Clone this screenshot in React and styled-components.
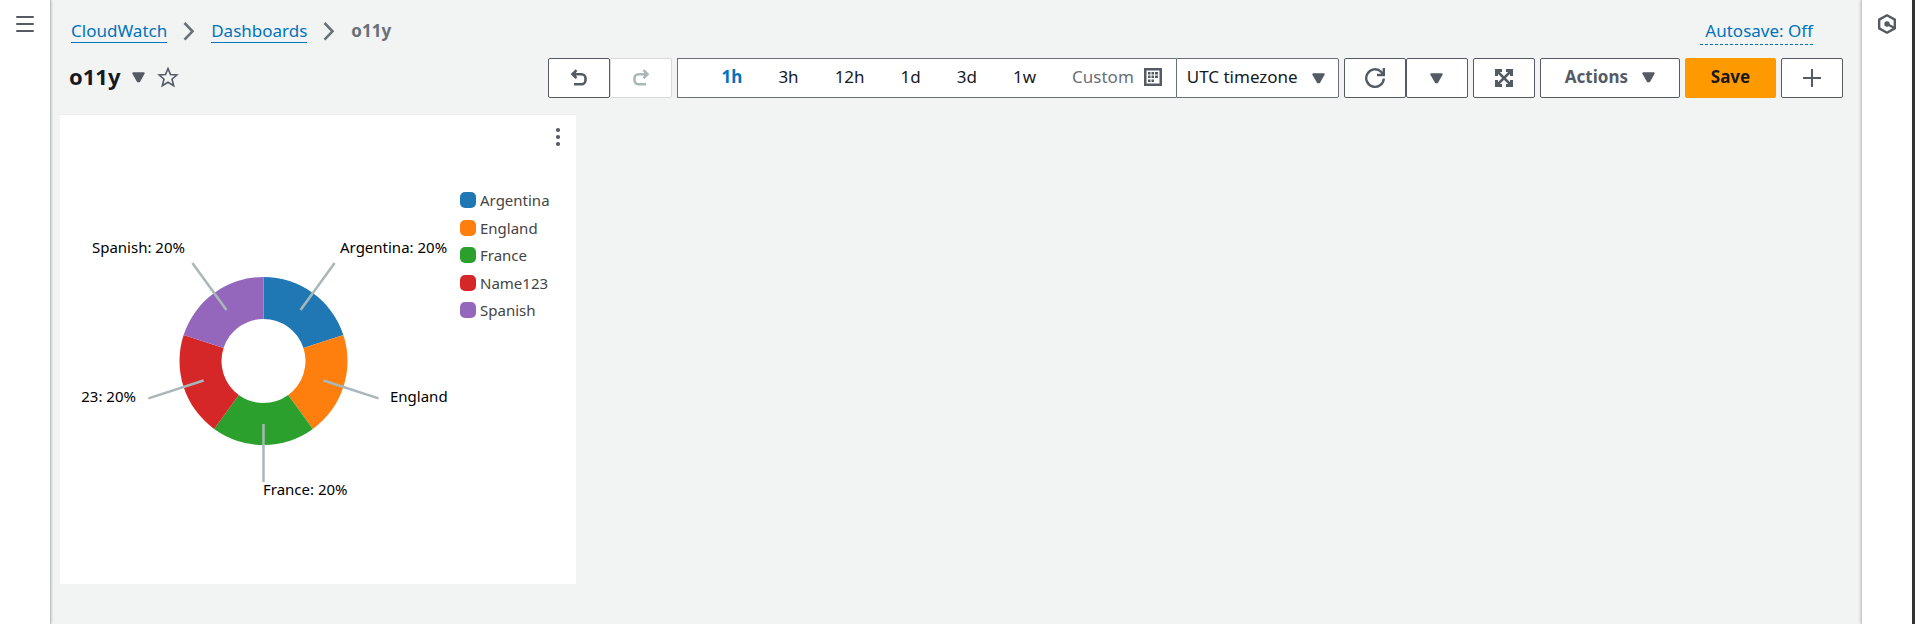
import React from "react";
import styled, { createGlobalStyle, css } from "styled-components";

const ink = "#16191f";
const slate = "#545b64";
const muted = "#687078";
const blue = "#0073bb";

const GlobalStyle = createGlobalStyle`
  *, *::before, *::after { box-sizing: border-box; }
  body {
    margin: 0;
    background: #f2f3f3;
    color: ${ink};
    font: 400 17px/22px "Noto Sans", "Open Sans", sans-serif;
  }
  button, select { font: inherit; color: inherit; margin: 0; }
  svg { display: block; flex: none; }
`;

const Page = styled.div`
  display: flex;
  min-height: 100vh;
`;

const Rail = styled.aside`
  flex: 0 0 auto;
  display: flex;
  flex-direction: column;
  align-items: center;
  background: #fff;
  padding-top: 12px;
`;

const NavRail = styled(Rail)`
  width: 51px;
  border-right: 1px solid #bcc4c5;
  box-shadow: 1px 0 2px rgba(0, 28, 36, 0.15);
`;

const ToolRail = styled(Rail)`
  width: 54px;
  border-left: 1px solid #c4cacb;
  border-right: 3px solid #333;
  box-shadow: -1px 0 2px rgba(0, 28, 36, 0.15);
`;

const IconButton = styled.button`
  display: flex;
  align-items: center;
  justify-content: center;
  min-width: 24px;
  height: 24px;
  padding: 0;
  border: 0;
  background: none;
  color: ${slate};
  cursor: pointer;
`;

const Main = styled.main`
  flex: 1;
  min-width: 0;
  padding: 20px 18px 20px 9px;
`;

const TopRow = styled.div`
  display: flex;
  align-items: flex-start;
  justify-content: space-between;
  min-height: 38px;
  padding: 0 30px 0 11px;
`;

const Crumbs = styled.nav`
  display: flex;
  align-items: flex-start;
  gap: 15px;
  color: ${muted};
`;

const CrumbLink = styled.a`
  color: ${blue};
  text-decoration: none;
  border-bottom: 1px solid ${blue};
`;

const CrumbCurrent = styled.span`
  font-weight: 700;
`;

const AutosaveLink = styled.a`
  padding: 0 0 2px 5px;
  color: ${blue};
  text-decoration: none;
  border-bottom: 1px dashed ${blue};
`;

const HeaderRow = styled.header`
  display: flex;
  align-items: center;
  justify-content: space-between;
  flex-wrap: wrap;
  margin-bottom: 16px;
`;

const TitleGroup = styled.div`
  display: flex;
  align-items: center;
  gap: 6px;
  padding: 0 0 2px 9px;
`;

const Title = styled.h1`
  margin: 0;
  padding-bottom: 2px;
  font-size: 22px;
  line-height: 36px;
  font-weight: 700;
`;

const Toolbar = styled.div`
  display: flex;
  flex-wrap: wrap;
  gap: 5px;
`;

const Joined = styled.div`
  display: flex;
`;

const ToolButton = styled.button`
  display: flex;
  align-items: center;
  justify-content: center;
  gap: 14px;
  min-width: 62px;
  height: 40px;
  padding: ${(p) => (p.$wide ? "0 24px 2px" : "0")};
  border: 1px solid ${slate};
  border-radius: 2px;
  background: #fff;
  color: ${slate};
  font-weight: 700;
  cursor: pointer;
  &:disabled {
    border-color: #d5dbdb;
    color: #aab7b8;
  }
  ${(p) =>
    p.$primary &&
    css`
      min-width: 91px;
      padding-bottom: 2px;
      border-color: #ff9900;
      background: #ff9900;
      color: ${ink};
    `}
`;

const Ranges = styled.div`
  display: flex;
  align-items: center;
  height: 40px;
  padding: 0 14px 2px 26px;
  border: 1px solid ${muted};
  border-right: 0;
  background: #fff;
`;

const RangeButton = styled.button`
  display: flex;
  align-items: center;
  gap: 10px;
  padding: 0 ${(p) => (p.$last ? "0" : "18px")} 0 18px;
  border: 0;
  background: none;
  color: ${(p) => (p.$active ? blue : p.$last ? muted : ink)};
  font-weight: ${(p) => (p.$active ? 700 : 400)};
  cursor: pointer;
`;

const ZoneField = styled.label`
  position: relative;
  display: flex;
  align-items: center;
  width: 163px;
  height: 40px;
`;

const ZoneSelect = styled.select`
  width: 100%;
  height: 100%;
  padding: 0 34px 2px 10px;
  appearance: none;
  border: 1px solid ${muted};
  border-radius: 0 2px 2px 0;
  background: #fff;
`;

const ZoneCaret = styled.span`
  position: absolute;
  right: 14px;
  color: ${slate};
  pointer-events: none;
`;

const Widget = styled.section`
  width: 516px;
  max-width: 100%;
  padding-bottom: 21px;
  border-top: 1px solid #eaeded;
  background: #fff;
`;

const WidgetHeader = styled.div`
  display: flex;
  align-items: center;
  justify-content: flex-end;
  height: 44px;
  padding-right: 6px;
`;

const WidgetBody = styled.div`
  display: flex;
  align-items: flex-start;
  gap: 13px;
  padding-left: 20px;
`;

const ChartText = styled.text`
  font-size: 15px;
  fill: #000;
`;

const Legend = styled.ul`
  display: flex;
  flex-direction: column;
  justify-content: space-between;
  height: 130px;
  margin: 31px 0 0;
  padding: 0;
  list-style: none;
  color: #444;
  font-size: 15px;
  line-height: 20px;
`;

const LegendItem = styled.li`
  display: flex;
  align-items: center;
  gap: 4px;
`;

const Swatch = styled.span`
  width: 16px;
  height: 16px;
  border-radius: 5px;
  background: ${(p) => p.$color};
`;

const Caret = () => (
  <svg width="13" height="11" viewBox="0 0 13 11" aria-hidden="true">
    <path d="M1.300 1.300h10.400L7.200 9.300h-1.400z" fill="currentColor" stroke="currentColor" strokeWidth="2" strokeLinejoin="round" />
  </svg>
);

const Chevron = () => (
  <svg width="14" height="22" viewBox="0 0 14 22" fill="none" stroke="currentColor" strokeWidth="2.600" aria-hidden="true">
    <path d="M2.500 3l8 8.300-8 8.300" />
  </svg>
);

const MenuIcon = () => (
  <svg width="18" height="18" viewBox="0 0 18 18" stroke="currentColor" strokeWidth="2" strokeLinecap="round" aria-hidden="true">
    <path d="M1 2h16M1 9h16M1 16h16" />
  </svg>
);

const HexIcon = () => (
  <svg width="20" height="22" viewBox="0 0 20 22" fill="none" stroke="currentColor" strokeWidth="2.400" aria-hidden="true">
    <path d="M10 2.200l7.800 4.400v8.800L10 19.800l-7.800-4.400V6.600z" strokeLinejoin="round" />
    <circle cx="10" cy="11" r="2.700" fill="currentColor" stroke="none" />
    <path d="M10 11l7.500 4" />
  </svg>
);

const StarIcon = () => (
  <svg width="22" height="22" viewBox="0 0 22 22" fill="none" stroke="currentColor" strokeWidth="1.600" aria-hidden="true">
    <path d="M11 2.500l2.500 6.100 6.300.4-4.800 4.200 1.700 6.600L11 16.300l-5.700 3.500L7 13.200 2.200 9l6.300-.4z" />
  </svg>
);

const UndoIcon = () => (
  <svg width="20" height="20" viewBox="0 0 20 20" fill="none" stroke="currentColor" strokeWidth="2.600" aria-hidden="true">
    <path d="M5 6.200h7.500a4 4 0 0 1 4 4v2.100a4 4 0 0 1-4 4H5" />
    <path d="M7.500 2.200L3.500 6.200l4 4" />
    <path d="M3 6.200l4-3.500v7z" fill="currentColor" stroke="none" />
  </svg>
);

const RedoIcon = () => (
  <svg width="20" height="20" viewBox="0 0 20 20" fill="none" stroke="currentColor" strokeWidth="2.600" aria-hidden="true">
    <path d="M15 6.200H7.500a4 4 0 0 0-4 4v2.100a4 4 0 0 0 4 4H15" />
    <path d="M12.500 2.200l4 4-4 4" />
    <path d="M17 6.200l-4-3.500v7z" fill="currentColor" stroke="none" />
  </svg>
);

const RefreshIcon = () => (
  <svg width="22" height="22" viewBox="0 0 22 22" fill="none" stroke="currentColor" strokeWidth="2.400" aria-hidden="true">
    <path d="M19.800 11.500a8.800 8.800 0 1 1-2.600-6.700l2 2.500" />
    <path d="M19.800 1v7H13" />
  </svg>
);

const ExpandIcon = () => (
  <svg width="18" height="18" viewBox="0 0 18 18" fill="none" stroke="currentColor" aria-hidden="true">
    <path d="M1.500 7V1.500H7M11 1.500h5.500V7M16.500 11v5.500H11M7 16.500H1.500V11" strokeWidth="3" />
    <path d="M2 2l14 14M16 2L2 16" strokeWidth="2.500" />
  </svg>
);

const CalendarIcon = () => (
  <svg width="18" height="18" viewBox="0 0 18 18" aria-hidden="true">
    <rect x="1.250" y="1.250" width="15.500" height="15.500" fill="none" stroke={slate} strokeWidth="2.500" />
    <path
      d="M7.500 4H10v2.500H7.500zM11 4h3v2.500h-3zM4 7.500h2.500V10H4zM7.500 7.500H10V10H7.500zM11 7.500h3V10h-3zM4 11.500h2.500V14H4zM7.500 11.500H10V14H7.500zM4 4h2.500v2.500H4z"
      fill={slate}
    />
  </svg>
);

const PlusIcon = () => (
  <svg width="18" height="18" viewBox="0 0 18 18" stroke="currentColor" strokeWidth="2" aria-hidden="true">
    <path d="M9 0v18M0 9h18" />
  </svg>
);

const KebabIcon = () => (
  <svg width="6" height="20" viewBox="0 0 6 20" fill="currentColor" aria-hidden="true">
    <circle cx="3" cy="3" r="2.100" />
    <circle cx="3" cy="10" r="2.100" />
    <circle cx="3" cy="17" r="2.100" />
  </svg>
);

const RANGES = ["1h", "3h", "12h", "1d", "3d", "1w"];

const SLICES = [
  { name: "Argentina", color: "#1f77b4", x: 260, y: 94, anchor: "start" },
  { name: "England", color: "#ff7f0e", x: 310, y: 243, anchor: "start" },
  { name: "France", color: "#2ca02c", x: 183, y: 336, anchor: "start" },
  { name: "Name123", color: "#d62728", x: 56, y: 243, anchor: "end" },
  { name: "Spanish", color: "#9467bd", x: 105, y: 94, anchor: "end" },
];

const CX = 183.5;
const CY = 202;
const at = (radius, turn) => {
  const a = turn * 2 * Math.PI;
  return [CX + radius * Math.sin(a), CY - radius * Math.cos(a)];
};

const slicePath = (from, to) =>
  `M${at(84, from)}A84 84 0 0 1 ${at(84, to)}L${at(42, to)}A42 42 0 0 0 ${at(42, from)}Z`;

function Donut() {
  const share = 1 / SLICES.length;
  return (
    <svg width="367" height="404" role="img" aria-label="Share by name">
      {SLICES.map((s, i) => (
        <path key={s.name} d={slicePath(i * share, (i + 1) * share)} fill={s.color} />
      ))}
      {SLICES.map((s, i) => {
        const [x1, y1] = at(63, (i + 0.5) * share);
        const [x2, y2] = at(121, (i + 0.5) * share);
        return <line key={s.name} x1={x1} y1={y1} x2={x2} y2={y2} stroke="#aab7b8" strokeWidth="2.500" />;
      })}
      {SLICES.map((s) => (
        <ChartText key={s.name} x={s.x} y={s.y} textAnchor={s.anchor}>
          {`${s.name}: 20%`}
        </ChartText>
      ))}
    </svg>
  );
}

export default function App() {
  return (
    <Page>
      <GlobalStyle />
      <NavRail>
        <IconButton aria-label="Open navigation">
          <MenuIcon />
        </IconButton>
      </NavRail>
      <Main>
        <TopRow>
          <Crumbs aria-label="Breadcrumb">
            <CrumbLink href="#cloudwatch">CloudWatch</CrumbLink>
            <Chevron />
            <CrumbLink href="#dashboards">Dashboards</CrumbLink>
            <Chevron />
            <CrumbCurrent>o11y</CrumbCurrent>
          </Crumbs>
          <AutosaveLink href="#autosave">Autosave: Off</AutosaveLink>
        </TopRow>
        <HeaderRow>
          <TitleGroup>
            <Title>o11y</Title>
            <IconButton aria-label="Switch dashboard">
              <Caret />
            </IconButton>
            <IconButton aria-label="Add to favorites">
              <StarIcon />
            </IconButton>
          </TitleGroup>
          <Toolbar>
            <Joined>
              <ToolButton aria-label="Undo">
                <UndoIcon />
              </ToolButton>
              <ToolButton aria-label="Redo" disabled>
                <RedoIcon />
              </ToolButton>
            </Joined>
            <Joined>
              <Ranges>
                {RANGES.map((r) => (
                  <RangeButton key={r} $active={r === "1h"}>
                    {r}
                  </RangeButton>
                ))}
                <RangeButton $last>
                  Custom
                  <CalendarIcon />
                </RangeButton>
              </Ranges>
              <ZoneField>
                <ZoneSelect aria-label="Time zone" defaultValue="utc">
                  <option value="utc">UTC timezone</option>
                </ZoneSelect>
                <ZoneCaret>
                  <Caret />
                </ZoneCaret>
              </ZoneField>
            </Joined>
            <Joined>
              <ToolButton aria-label="Refresh">
                <RefreshIcon />
              </ToolButton>
              <ToolButton aria-label="Refresh options">
                <Caret />
              </ToolButton>
            </Joined>
            <ToolButton aria-label="Full screen">
              <ExpandIcon />
            </ToolButton>
            <ToolButton $wide>
              Actions
              <Caret />
            </ToolButton>
            <ToolButton $primary>Save</ToolButton>
            <ToolButton aria-label="Add widget">
              <PlusIcon />
            </ToolButton>
          </Toolbar>
        </HeaderRow>
        <Widget>
          <WidgetHeader>
            <IconButton aria-label="Widget actions">
              <KebabIcon />
            </IconButton>
          </WidgetHeader>
          <WidgetBody>
            <Donut />
            <Legend>
              {SLICES.map((s) => (
                <LegendItem key={s.name}>
                  <Swatch $color={s.color} />
                  {s.name}
                </LegendItem>
              ))}
            </Legend>
          </WidgetBody>
        </Widget>
      </Main>
      <ToolRail>
        <IconButton aria-label="Open tools">
          <HexIcon />
        </IconButton>
      </ToolRail>
    </Page>
  );
}
